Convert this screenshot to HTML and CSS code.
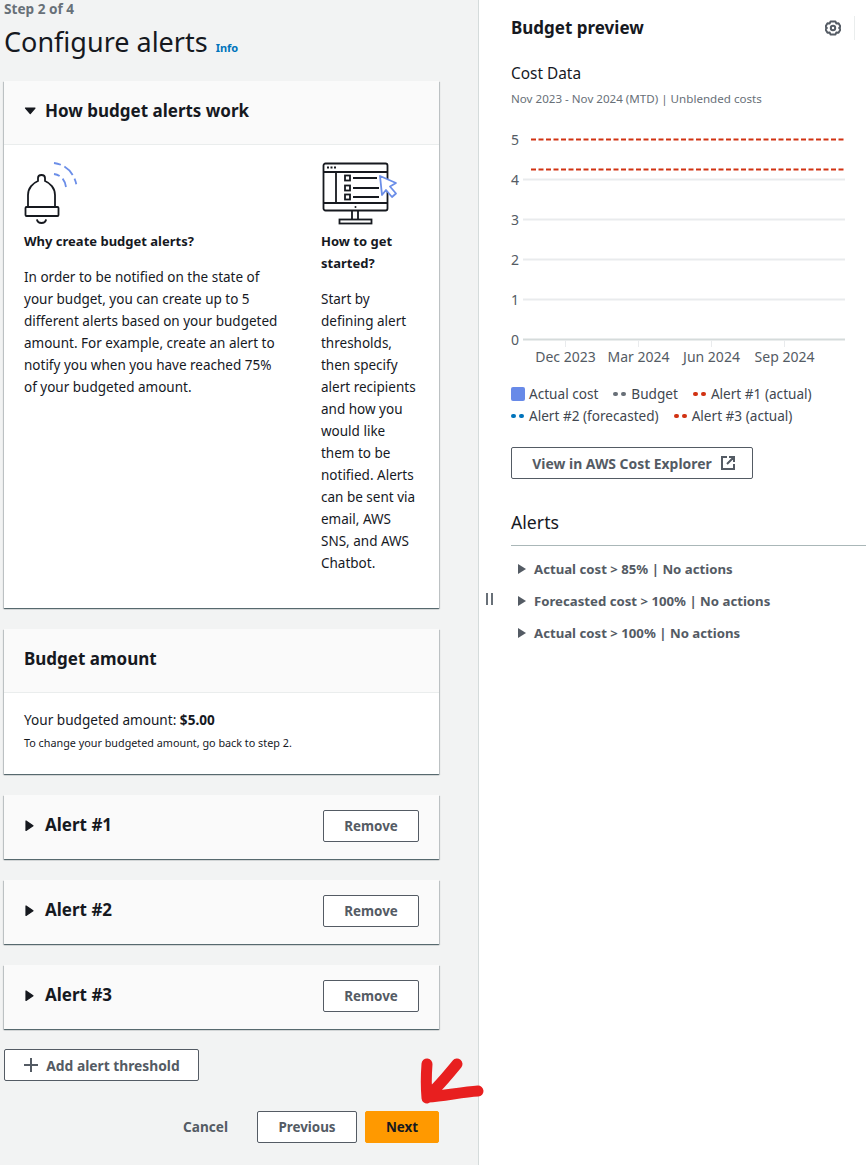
FILE: index.html
```html
<!DOCTYPE html>
<html lang="en">
<head>
  <meta charset="UTF-8">
  <title>Configure alerts</title>
  <link rel="stylesheet" href="styles.css">
</head>
<body>

<div class="layout">
  <main class="wizard">
    <div class="step-label">Step 2 of 4</div>
    <div class="page-title">
      <h1>Configure alerts</h1>
      <a class="info-link">Info</a>
    </div>

    <section class="card">
      <div class="card-header">
        <svg class="caret" width="14" height="14" viewBox="0 0 14 14"><path d="M1.500 4h9.500L6.250 9.500z" fill="#16191f" stroke="#16191f" stroke-width="1.200" stroke-linejoin="round"/></svg>
        <h2>How budget alerts work</h2>
      </div>
      <div class="how-body">
        <div class="how-why">
          <svg class="how-icon" width="60" height="68" viewBox="0 0 60 68" fill="none">
            <path d="M4 46V34c0-7 5-12 10-14v-3c0-2 1.500-3 3.500-3s3.500 1 3.500 3v3c5 2 10 7 10 14v12" stroke="#16191f" stroke-width="1.800"/>
            <rect x="1.500" y="46" width="33" height="9" rx="1" stroke="#16191f" stroke-width="1.800"/>
            <path d="M13 59c1 4 8 4 9 0" stroke="#16191f" stroke-width="1.800" stroke-linecap="round"/>
            <path d="M30 2C42 3.500 51 12 53 27" stroke="#6b8ee8" stroke-width="1.800" stroke-dasharray="7 4 12 4 6 4 1.500 20"/>
            <path d="M30 13c7 1 11 6 12 13" stroke="#6b8ee8" stroke-width="1.800" stroke-dasharray="6 4 10 20"/>
          </svg>
          <h3>Why create budget alerts?</h3>
          <p>In order to be notified on the state of your budget, you can create up to 5 different alerts based on your budgeted amount. For example, create an alert to notify you when you have reached 75% of your budgeted amount.</p>
        </div>
        <div class="how-start">
          <svg class="how-icon" width="78" height="68" viewBox="0 0 78 68" fill="none">
            <rect x="2.500" y="2.500" width="64" height="47" rx="2" stroke="#16191f" stroke-width="1.800"/>
            <path d="M2.500 11h64M2.500 42h64M15 11v31" stroke="#16191f" stroke-width="1.800"/>
            <path d="M6 6.500h2M9.500 6.500h2M13 6.500h2" stroke="#16191f" stroke-width="1.800"/>
            <rect x="24" y="14.500" width="5" height="5" stroke="#16191f" stroke-width="1.800"/>
            <rect x="24" y="24.500" width="5" height="5" stroke="#16191f" stroke-width="1.800"/>
            <rect x="24" y="33.500" width="5" height="5" stroke="#16191f" stroke-width="1.800"/>
            <path d="M32 17h24M32 27h26M32 36h26" stroke="#16191f" stroke-width="1.800"/>
            <circle cx="34.500" cy="46" r="1" fill="#16191f"/>
            <path d="M31 50v8M37 50v8" stroke="#16191f" stroke-width="1.800"/>
            <rect x="18.500" y="58.500" width="32" height="4" stroke="#16191f" stroke-width="1.800"/>
            <path d="M59 15l16 7-6 3.500 6 7-4 3.500-6-7-4 5z" fill="#fff" stroke="#6b8ee8" stroke-width="1.800" stroke-linejoin="round"/>
          </svg>
          <h3>How to get started?</h3>
          <p>Start by defining alert thresholds, then specify alert recipients and how you would like them to be notified. Alerts can be sent via email, AWS SNS, and AWS Chatbot.</p>
        </div>
      </div>
    </section>

    <section class="card">
      <div class="card-header">
        <h2>Budget amount</h2>
      </div>
      <div class="amount-body">
        <div class="amount-line">Your budgeted amount: <strong>$5.00</strong></div>
        <div class="amount-note">To change your budgeted amount, go back to step 2.</div>
      </div>
    </section>

    <section class="card">
      <div class="card-header alert-header">
        <svg class="caret" width="14" height="14" viewBox="0 0 14 14"><path d="M2 2v9.500l7-4.750z" fill="#16191f" stroke="#16191f" stroke-width="1.200" stroke-linejoin="round"/></svg>
        <h2>Alert #1</h2>
        <button class="btn btn-remove">Remove</button>
      </div>
    </section>

    <section class="card">
      <div class="card-header alert-header">
        <svg class="caret" width="14" height="14" viewBox="0 0 14 14"><path d="M2 2v9.500l7-4.750z" fill="#16191f" stroke="#16191f" stroke-width="1.200" stroke-linejoin="round"/></svg>
        <h2>Alert #2</h2>
        <button class="btn btn-remove">Remove</button>
      </div>
    </section>

    <section class="card">
      <div class="card-header alert-header">
        <svg class="caret" width="14" height="14" viewBox="0 0 14 14"><path d="M2 2v9.500l7-4.750z" fill="#16191f" stroke="#16191f" stroke-width="1.200" stroke-linejoin="round"/></svg>
        <h2>Alert #3</h2>
        <button class="btn btn-remove">Remove</button>
      </div>
    </section>

    <button class="btn btn-add">
      <svg width="16" height="16" viewBox="0 0 16 16"><path d="M8 1v14M1 8h14" stroke="#545b64" stroke-width="2"/></svg>
      Add alert threshold
    </button>

    <div class="wizard-actions">
      <a class="cancel-link">Cancel</a>
      <button class="btn btn-previous">Previous</button>
      <button class="btn btn-next">Next</button>
    </div>
  </main>

  <aside class="preview">
    <span class="drag-handle"></span>
    <div class="preview-head">
      <h2>Budget preview</h2>
      <svg class="gear" width="16" height="16" viewBox="0 0 16 16" fill="none" stroke="#545b64" stroke-width="2" stroke-linejoin="round">
        <path d="M5.500 1.500h5l.8 2 2.200-.3 2 3.300-1.300 1.500 1.300 1.500-2 3.300-2.200-.3-.8 2h-5l-.8-2-2.200.3-2-3.300L1.800 8 .5 6.500l2-3.300 2.200.3z"/>
        <circle cx="8" cy="8" r="2.200"/>
      </svg>
      <span class="head-divider"></span>
    </div>

    <h3 class="cost-title">Cost Data</h3>
    <div class="cost-sub">Nov 2023 - Nov 2024 (MTD) | Unblended costs</div>

    <svg class="chart" width="355" height="240" viewBox="0 0 355 240">
      <g stroke="#e9ebed" stroke-width="2">
        <path d="M12 60.500H334M12 100.500H334M12 140.500H334M12 180.500H334"/>
        <path d="M12 220.500H334" stroke="#d5dbdb"/>
      </g>
      <path d="M54.500 221v7M127.500 221v7M200.500 221v7M273.500 221v7" stroke="#e9ebed" stroke-width="1"/>
      <path d="M20 20.500H334M20 50.500H334" stroke="#d13212" stroke-width="2" stroke-dasharray="5 2.500"/>
      <g class="chart-y" text-anchor="middle">
        <text x="4" y="25.500">5</text>
        <text x="4" y="65.500">4</text>
        <text x="4" y="105.500">3</text>
        <text x="4" y="145.500">2</text>
        <text x="4" y="185.500">1</text>
        <text x="4" y="225.500">0</text>
      </g>
      <g class="chart-x" text-anchor="middle">
        <text x="54.500" y="243">Dec 2023</text>
        <text x="127.500" y="243">Mar 2024</text>
        <text x="200.500" y="243">Jun 2024</text>
        <text x="273.500" y="243">Sep 2024</text>
      </g>
    </svg>

    <div class="legend">
      <span class="legend-item"><i class="swatch"></i>Actual cost</span>
      <span class="legend-item"><i class="dots dots-grey"></i>Budget</span>
      <span class="legend-item"><i class="dots dots-red"></i>Alert #1 (actual)</span>
      <span class="legend-item"><i class="dots dots-blue"></i>Alert #2 (forecasted)</span>
      <span class="legend-item"><i class="dots dots-red"></i>Alert #3 (actual)</span>
    </div>

    <button class="btn btn-explorer">
      View in AWS Cost Explorer
      <svg width="16" height="16" viewBox="0 0 16 16" fill="none" stroke="#545b64" stroke-width="2"><path d="M7 2H2v12h12V9M9 2h5v5M14 2L7 9"/></svg>
    </button>

    <h3 class="alerts-title">Alerts</h3>
    <ul class="alert-list">
      <li><svg width="12" height="12" viewBox="0 0 12 12"><path d="M2 1v10l8-5z" fill="#545b64"/></svg>Actual cost &gt; 85% | No actions</li>
      <li><svg width="12" height="12" viewBox="0 0 12 12"><path d="M2 1v10l8-5z" fill="#545b64"/></svg>Forecasted cost &gt; 100% | No actions</li>
      <li><svg width="12" height="12" viewBox="0 0 12 12"><path d="M2 1v10l8-5z" fill="#545b64"/></svg>Actual cost &gt; 100% | No actions</li>
    </ul>
  </aside>
</div>

<!-- hand drawn arrow on top of the screenshot -->
<svg class="scribble" width="80" height="70" viewBox="0 0 80 70" fill="none">
  <path d="M9 7C8 20 8 30 9 41M39 7C30 18 20 30 11 38M10 40c16-1 34-5 50-6" stroke="#e81f1f" stroke-width="11" stroke-linecap="round" stroke-linejoin="round"/>
</svg>

</body>
</html>
```

FILE: styles.css
```css
* {
  box-sizing: border-box;
}

body {
  margin: 0;
  font-family: "Noto Sans", Arial, sans-serif;
  font-size: 14px;
  line-height: 22px;
  color: #16191f;
  background: #fff;
  overflow: hidden;
}

h1, h2, h3, p, ul {
  margin: 0;
  padding: 0;
}

.layout {
  display: flex;
  height: 1165px;
}

/* left side */
.wizard {
  width: 479px;
  flex: none;
  padding: 0 39px 0 4px;
  background: #f2f3f3;
  border-right: 1px solid #d5dbdb;
}

.step-label {
  height: 18px;
  line-height: 18px;
  font-size: 13.6px;
  font-weight: 700;
  color: #687078;
}

.page-title {
  display: flex;
  align-items: baseline;
  gap: 8px;
  height: 63px;
  padding-top: 7px;
}

.page-title h1 {
  font-size: 27px;
  line-height: 34px;
  font-weight: 400;
}

.info-link {
  font-size: 11px;
  font-weight: 700;
  color: #0073bb;
}

.card {
  background: #fff;
  margin-bottom: 21px;
  box-shadow: 0 1px 1px 0 rgba(0,28,36,0.5), 1px 1px 1px 0 rgba(0,28,36,0.15), -1px 1px 1px 0 rgba(0,28,36,0.15);
}

.card-header {
  display: flex;
  align-items: center;
  height: 64px;
  padding: 0 20px;
  background: #fafafa;
  border-bottom: 1px solid #eaeded;
}

.card-header h2 {
  margin-bottom: 3px;
  font-size: 17px;
  line-height: 22px;
  font-weight: 700;
}

.caret {
  margin-right: 7px;
  margin-bottom: 3px;
}

.alert-header {
  border-bottom: none;
}

.alert-header h2 {
  flex: 1;
  margin-bottom: 5px;
}

.how-body {
  display: flex;
  height: 463px;
  padding: 16px 20px 0;
}

.how-why {
  width: 297px;
  flex: none;
  padding-right: 40px;
}

.how-start {
  flex: 1;
}

.how-icon {
  display: block;
  height: 68px;
}

.how-body h3 {
  margin-top: 1px;
  font-size: 13px;
  font-weight: 700;
}

.how-body p {
  margin-top: 14px;
  font-size: 13.5px;
}

.amount-body {
  height: 81px;
  padding: 16px 20px 0;
}

.amount-line {
  font-size: 13.6px;
}

.amount-note {
  margin-top: 2px;
  font-size: 10.8px;
  line-height: 20px;
}

/* buttons */
.btn {
  display: flex;
  align-items: center;
  justify-content: center;
  height: 32px;
  padding: 0;
  font-family: inherit;
  font-size: 13.4px;
  font-weight: 700;
  color: #545b64;
  background: #fff;
  border: 1px solid #545b64;
  border-radius: 2px;
}

.btn-remove {
  width: 96px;
  margin-bottom: 2px;
}

.btn-add {
  width: 195px;
  gap: 7px;
  margin-top: -1px;
  font-size: 13.8px;
}

.wizard-actions {
  display: flex;
  align-items: center;
  justify-content: flex-end;
  margin-top: 30px;
}

.cancel-link {
  margin-right: 29px;
  font-size: 13.6px;
  font-weight: 700;
  color: #545b64;
}

.btn-previous {
  width: 100px;
  margin-right: 8px;
}

.btn-next {
  width: 74px;
  color: #16191f;
  background: #ff9900;
  border-color: #ff9900;
}

/* right side */
.preview {
  position: relative;
  flex: 1;
  padding: 16px 0 0 32px;
}

.drag-handle {
  position: absolute;
  left: 7px;
  top: 593px;
  width: 7px;
  height: 12px;
  border-left: 2px solid #687078;
  border-right: 2px solid #687078;
}

.preview-head {
  display: flex;
  align-items: center;
  height: 24px;
}

.preview-head h2 {
  flex: 1;
  font-size: 17px;
  font-weight: 700;
}

.gear {
  margin-right: 13px;
}

.head-divider {
  width: 1px;
  height: 24px;
  margin-right: 11px;
  background: #eaeded;
}

.cost-title {
  margin-top: 23px;
  font-size: 15.4px;
  font-weight: 400;
}

.cost-sub {
  margin-top: 3px;
  font-size: 11.6px;
  color: #687078;
}

.chart {
  display: block;
  margin-top: 9px;
  overflow: visible;
}

.chart text {
  font-size: 14px;
  fill: #545b64;
}

.legend {
  display: flex;
  flex-wrap: wrap;
  gap: 0 15px;
  width: 330px;
  margin-top: 24px;
  font-size: 13.6px;
  color: #414750;
}

.legend-item {
  display: flex;
  align-items: center;
  gap: 4px;
}

.swatch {
  width: 14px;
  height: 14px;
  border-radius: 2px;
  background: #688ae8;
}

.dots {
  display: flex;
  gap: 3px;
  width: 14px;
}

.dots::before,
.dots::after {
  content: "";
  width: 5px;
  height: 4px;
  border-radius: 2px;
  background: currentColor;
}

.dots-grey { color: #687078; }
.dots-red { color: #d13212; }
.dots-blue { color: #0073bb; }

.btn-explorer {
  width: 242px;
  gap: 8px;
  margin-top: 20px;
  padding-left: 4px;
  font-size: 13.9px;
}

.alerts-title {
  margin-top: 32px;
  padding-bottom: 12px;
  font-size: 17.7px;
  font-weight: 400;
  border-bottom: 1px solid #aab7b8;
}

.alert-list {
  list-style: none;
  padding: 7px 0 0 5px;
}

.alert-list li {
  display: flex;
  align-items: center;
  gap: 6px;
  height: 32px;
  font-size: 13.2px;
  font-weight: 700;
  color: #545b64;
}

.scribble {
  position: absolute;
  left: 418px;
  top: 1057px;
}
```
